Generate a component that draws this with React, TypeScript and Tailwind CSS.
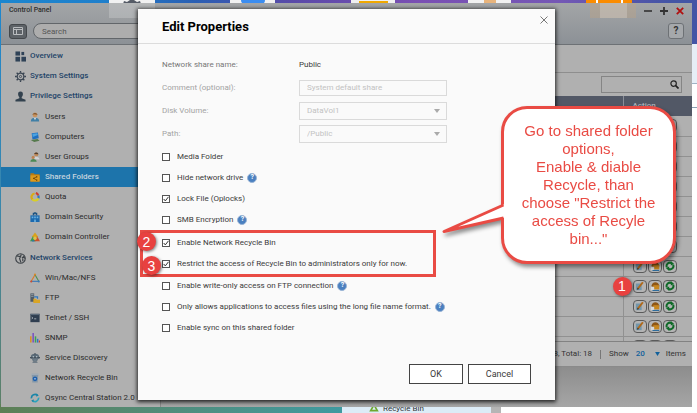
import React from 'react';

type IconProps = { children: React.ReactNode; size?: 'sm' | 'md' };

const Glyph: React.FC<IconProps> = ({ children, size = 'sm' }) => (
  <svg viewBox="0 0 12 12" className={size === 'md' ? 'size-[11px] shrink-0' : 'size-[10px] shrink-0'} fill="none">
    {children}
  </svg>
);

const icons: Record<string, React.ReactNode> = {
  overview: (
    <g fill="#2f4257">
      <rect x="0.5" y="0.5" width="5" height="4.5" />
      <rect x="7" y="1" width="3" height="3.5" />
      <rect x="0.5" y="6.300" width="5" height="5.200" />
      <rect x="7" y="6.300" width="5" height="5.200" />
    </g>
  ),
  gear: (
    <g stroke="#3b4653">
      <circle cx="6" cy="6" r="3.6" strokeWidth="1.3" />
      <circle cx="6" cy="6" r="1.2" strokeWidth="1" />
      <path d="M6 0v2M6 10v2M0 6h2M10 6h2M1.8 1.8l1.4 1.4M8.8 8.8l1.4 1.4M1.8 10.2l1.4-1.4M8.8 3.2l1.4-1.4" strokeWidth="1.5" />
    </g>
  ),
  privilege: (
    <path d="M6 0.5c2 0 2.8 1.400 2.600 3.200C8.400 5.200 7.700 6 7.300 6.500v1.500l4.200 1.600v1.900H0.500V9.600L4.700 8V6.500C4.300 6 3.600 5.200 3.400 3.700 3.200 1.900 4 .5 6 .5z" fill="#33424f" />
  ),
  globe: (
    <g stroke="#3f4449">
      <circle cx="6" cy="6" r="5.2" strokeWidth="1.2" />
      <path d="M2 3.200L6 4l-1 2 1.500 4.500M7 1.500l-1 2M7.500 5.500l2-1.500 1.200 2M8.500 6v3" strokeWidth="1.3" />
    </g>
  ),
  user: (
    <>
      <circle cx="6" cy="3.500" r="2.800" fill="#c9925c" />
      <path d="M3 3.200C3.200.8 8.800.8 9 3.200 7.500 2.600 5 2.200 3 3.200z" fill="#6d4a2b" />
      <path d="M1 11.500C1 8.200 3 7 6 7s5 1.200 5 4.500z" fill="#3f7fa6" />
      <path d="M4.500 7L6 9.800 7.500 7z" fill="#d9d9d9" />
    </>
  ),
  computer: (
    <>
      <path d="M2 1.500L9.500 .5l1 7L3 9z" fill="#1f6fc0" />
      <path d="M2.800 2.200L9 1.400l.3 2.300-6 2.300z" fill="#4ca3e0" />
      <path d="M1 9.500L9 8.500l2.500 2L5 12z" fill="#55794c" />
    </>
  ),
  group: (
    <>
      <circle cx="7.500" cy="3" r="2.500" fill="#c08a58" />
      <path d="M5 2.500C5.500 0 9.800 0 10 2.800z" fill="#53402f" />
      <path d="M4 8.500C4 6.500 5.500 5.800 7.500 5.800s3.800 1 3.800 3.200z" fill="#cfd3d6" />
      <circle cx="3.800" cy="6.500" r="1.900" fill="#bd8352" />
      <path d="M.5 11.800C.5 9.500 2 8.500 4 8.500s4 1 4 3.300z" fill="#4c8a56" />
    </>
  ),
  folder: (
    <>
      <path d="M.5 1.500h4l1 1.300h6v8.700H.5z" fill="#b97a10" />
      <rect x="0.500" y="4" width="11" height="7.500" fill="#dd9a1c" />
      <path d="M8 5.700L4.500 7.700 8 9.700" stroke="#6d4305" strokeWidth="0.900" />
      <path d="M7.300 5h1.500v1.500H7.300zM3.800 7h1.500v1.500H3.800zM7.300 9h1.500v1.500H7.300z" fill="#6d4305" />
    </>
  ),
  quota: (
    <g strokeWidth="2.600">
      <path d="M5.500 1.800A4.300 4.300 0 0 0 3 9" stroke="#d9ab14" />
      <path d="M3 9a4.300 4.300 0 0 0 7-1.500" stroke="#d9cf24" />
      <path d="M10.200 7.500A4.300 4.300 0 0 0 9.800 4.300" stroke="#2d7ac2" />
      <path d="M7 1.200A4.300 4.300 0 0 1 9.800 4" stroke="#cf3b2c" />
    </g>
  ),
  security: (
    <>
      <path d="M0.500 4h11v8H.5z" fill="#1b69ae" />
      <path d="M4 4V1.500h4V4M6 0v3" stroke="#174f7f" strokeWidth="1.400" />
      <path d="M2 5.500h2v2H2zM5 5.500h2v2H5zM8 5.500h2v2H8zM5 9h2v3H5z" fill="#6cb1df" />
    </>
  ),
  controller: (
    <>
      <path d="M6 .5L10 6H2z" fill="#d9a21a" />
      <path d="M3.500 5L7 11H0z" fill="#3c9950" />
      <path d="M8.500 5l3.500 6H5z" fill="#c9512b" />
      <circle cx="6" cy="7.500" r="2" fill="#e0c04a" />
      <path d="M2 11.500C2.500 9.500 5 9.500 5.500 11.500z" fill="#2f6fb0" />
    </>
  ),
  triangle: (
    <>
      <path d="M6 2L1.500 10" stroke="#d97b25" strokeWidth="1.300" />
      <path d="M6 2l4.500 8" stroke="#4a8f52" strokeWidth="1.300" />
      <path d="M1.500 10h9" stroke="#3b78b8" strokeWidth="1.300" />
      <circle cx="6" cy="1.800" r="1.300" fill="#d9892b" />
      <circle cx="1.500" cy="10.200" r="1.300" fill="#c94b32" />
      <circle cx="10.500" cy="10.200" r="1.300" fill="#3c78b5" />
    </>
  ),
  ftp: (
    <>
      <rect x="0.500" y="0.500" width="4.500" height="10" fill="#4e5a66" />
      <path d="M1.300 2h3M1.300 4h3" stroke="#9aa6b0" />
      <path d="M4 7h3l1 1h4v4H4z" fill="#d9a526" />
      <path d="M5 4.500h4V7" stroke="#2f78bd" strokeWidth="1.500" />
    </>
  ),
  terminal: (
    <>
      <rect x="0.500" y="1" width="11" height="10" fill="#2f3e50" />
      <rect x="0.500" y="1" width="11" height="1.500" fill="#5c6b7b" />
      <path d="M2 5l1.500 1L2 7M5 7h2.500" stroke="#c6ccd2" strokeWidth="0.900" />
    </>
  ),
  chart: (
    <>
      <path d="M1 4v7.500" stroke="#d98f1f" strokeWidth="1.800" />
      <path d="M3.800 0v11.500" stroke="#7a4fc0" strokeWidth="1.800" />
      <path d="M6.600 4v7.500" stroke="#3aa155" strokeWidth="1.800" />
      <path d="M9.200 7v4.500" stroke="#2e76c4" strokeWidth="1.800" />
      <path d="M11.300 9v2.500" stroke="#c9442f" strokeWidth="1.400" />
    </>
  ),
  discovery: (
    <>
      <path d="M1 5a5 4 0 0 1 10 0v2H1z" fill="#5b6b78" />
      <path d="M6 0v2M0 5.500h12" stroke="#45525e" strokeWidth="1.300" />
      <circle cx="4" cy="4.500" r="0.900" fill="#b9c4cc" />
      <circle cx="8" cy="4.500" r="0.900" fill="#b9c4cc" />
      <path d="M3 7h6l-1 3H4zM3 11.300h6" stroke="#5b6b78" fill="#74838f" />
    </>
  ),
  bin: (
    <>
      <path d="M2 1h8l-.8 10.500H2.800z" fill="#8497a8" />
      <path d="M1.500 1.500h9" stroke="#a9b3bb" strokeWidth="1.200" />
      <circle cx="6" cy="7" r="2.800" fill="#1d5fae" />
      <circle cx="6" cy="7" r="1" fill="#b8cfe4" />
    </>
  ),
  qsync: (
    <g strokeWidth="2">
      <path d="M1.700 6.500A4.300 4.300 0 0 1 9 3" stroke="#1b86a8" />
      <path d="M10.300 5.500A4.300 4.300 0 0 1 3 9" stroke="#29a3bd" />
      <path d="M8 .5l2.500 2.500-3 1.500zM4 11.500L1.500 9l3-1.500z" fill="#1b86a8" />
    </g>
  ),
};

const mainItems = [
  { icon: 'overview', label: 'Overview' },
  { icon: 'gear', label: 'System Settings' },
  { icon: 'privilege', label: 'Privilege Settings' },
];

const privilegeItems = [
  { icon: 'user', label: 'Users' },
  { icon: 'computer', label: 'Computers' },
  { icon: 'group', label: 'User Groups' },
  { icon: 'folder', label: 'Shared Folders', active: true },
  { icon: 'quota', label: 'Quota' },
  { icon: 'security', label: 'Domain Security' },
  { icon: 'controller', label: 'Domain Controller' },
];

const networkItems = [
  { icon: 'triangle', label: 'Win/Mac/NFS' },
  { icon: 'ftp', label: 'FTP' },
  { icon: 'terminal', label: 'Telnet / SSH' },
  { icon: 'chart', label: 'SNMP' },
  { icon: 'discovery', label: 'Service Discovery' },
  { icon: 'bin', label: 'Network Recycle Bin' },
  { icon: 'qsync', label: 'Qsync Central Station 2.0' },
];

const NavHeading: React.FC<{ icon: string; label: string }> = ({ icon, label }) => (
  <a href="#" className="flex h-5 items-center gap-1 pl-[14px] font-medium text-[#1f4468]">
    <Glyph size="md">{icons[icon]}</Glyph>
    {label}
  </a>
);

const NavItem: React.FC<{ icon: string; label: string; active?: boolean }> = ({ icon, label, active }) => (
  <a
    href="#"
    className={`flex h-5 items-center gap-[5px] pl-[29px] whitespace-nowrap ${
      active ? 'bg-[#1d74ab] font-medium text-[#c3d3de]' : 'text-[#2b2b2b]'
    }`}
  >
    <Glyph>{icons[icon]}</Glyph>
    {label}
  </a>
);

const Sidebar = () => (
  <nav className="w-[160px] shrink-0 overflow-hidden border-r border-[#8a8a8a] bg-[#b0b0b0] pt-px text-[8px]">
    {mainItems.map((item) => <NavHeading key={item.label} {...item} />)}
    <div className="my-px">
      {privilegeItems.map((item) => <NavItem key={item.label} {...item} />)}
    </div>
    <NavHeading icon="globe" label="Network Services" />
    <div>
      {networkItems.map((item) => <NavItem key={item.label} {...item} />)}
    </div>
  </nav>
);

const Badge: React.FC<{ n: number; className: string }> = ({ n, className }) => (
  <span
    className={`absolute z-20 flex size-[19px] items-center justify-center rounded-full bg-[#e8413f] font-['Liberation_Sans',sans-serif] text-[14px] leading-none text-white shadow-[1px_1px_3px_rgba(0,0,0,0.5)] ${className}`}
  >
    {n}
  </span>
);

const RowButton: React.FC<{ label: string; children: React.ReactNode }> = ({ label, children }) => (
  <button aria-label={label} className="flex h-[13px] w-[14px] items-center justify-center rounded border border-[#5a5a5a] bg-[#b4b4b4]">
    <Glyph>{children}</Glyph>
  </button>
);

const RowActions = () => (
  <div className="flex gap-px pl-[9px]">
    <RowButton label="Edit properties">
      <path d="M1 3h7v8H1z" fill="#7296ab" />
      <path d="M3.500 9L9.500 1.500" stroke="#b06a1c" strokeWidth="2.400" />
      <path d="M2.500 10.500l.5-2.500 2 1.500z" fill="#3b2a18" />
    </RowButton>
    <RowButton label="Edit permissions">
      <path d="M2 5C3 0 10 .5 11 5v2H2z" fill="#8e5615" />
      <path d="M4 5h7v5H4z" fill="#c6861f" />
      <path d="M1 7h4v4H1z" fill="#d8d8d8" />
      <path d="M3 11.500h8" stroke="#2e6c9c" strokeWidth="1.500" />
    </RowButton>
    <RowButton label="Refresh">
      <path d="M2.200 7.500A4 4 0 0 1 8 2.600" stroke="#0f6a28" strokeWidth="2.400" />
      <path d="M9.800 4.500A4 4 0 0 1 4 9.400" stroke="#0f6a28" strokeWidth="2.400" />
      <path d="M7 0l4 3.500-4 2zM5 12L1 8.500l4-2z" fill="#0f6a28" />
    </RowButton>
  </div>
);

const ShareTable = () => (
  <div className="min-h-0 flex-1 overflow-hidden border-b border-[#828282]">
    <table className="w-full table-fixed border-collapse text-left text-[8px]">
      <colgroup>
        <col />
        <col className="w-[69px]" />
      </colgroup>
      <thead className="bg-[#525866] text-[#aeb1b8]">
        <tr className="h-5">
          <td className="p-0" />
          <th scope="col" className="border-l border-[#8b8f98] p-0 pl-[9px] font-medium">Action</th>
        </tr>
      </thead>
      <tbody>
        {Array.from({ length: 12 }, (_, i) => (
          <tr key={i} className="h-5 border-b border-[#919191]">
            <td className="p-0" />
            <td className="relative border-l border-[#919191] p-0">
              <RowActions />
              {i === 8 && <Badge n={1} className="top-0 -left-[11px]" />}
            </td>
          </tr>
        ))}
      </tbody>
    </table>
  </div>
);

const ControlPanel = () => (
  <section className="absolute top-[3px] right-[5px] bottom-[6px] left-px flex flex-col overflow-hidden bg-[#b0b0b0]">
    <header className="relative shrink-0 border-b border-[#6d7175] bg-linear-to-b from-[#a3a5a7] to-[#8c9196]">
      {/* desktop tiles showing faintly through the title bar */}
      <div className="absolute top-0 left-[108px] h-[15px] w-[46px] bg-white/20" />
      <div className="absolute top-0 right-[56px] flex h-[15px] w-[46px] justify-center bg-[#c9a77c]/30">
        <div className="w-[27px] bg-white/20" />
      </div>
      <div className="relative flex h-[15px] items-center justify-between pr-2 pl-2">
        <h1 className="text-[7px] font-medium text-[#2d2d2d]">Control Panel</h1>
        <div className="flex items-center gap-2">
          <button aria-label="Minimize">
            <svg viewBox="0 0 8 8" className="size-2"><path d="M0 4h8" stroke="#333" strokeWidth="1.600" /></svg>
          </button>
          <button aria-label="Maximize">
            <svg viewBox="0 0 8 8" className="size-2"><path d="M0 4h8M4 0v8" stroke="#333" strokeWidth="1.800" /></svg>
          </button>
          <button aria-label="Close">
            <svg viewBox="0 0 8 8" className="size-2"><path d="M.8.8l6.400 6.400M7.200.8L.8 7.200" stroke="#b01010" strokeWidth="1.800" /></svg>
          </button>
        </div>
      </div>
      <div className="flex h-[26px] items-center gap-[6px] pr-2 pl-2">
        <button aria-label="Toggle sidebar" className="flex h-[15px] w-[18px] items-center justify-center rounded-[3px] border border-[#44484c] bg-[#5d6267]">
          <svg viewBox="0 0 10 8" className="h-2 w-[10px]" fill="none" stroke="#b9bcbf">
            <path d="M.5.500h9v7h-9zM.5 2.500h9M3.500 2.500v5" />
          </svg>
        </button>
        <input
          type="text"
          aria-label="Search"
          placeholder="Search"
          className="h-4 w-[130px] rounded-full border border-[#62666a] bg-[#adadad] px-2 text-[8px] placeholder-[#555]"
        />
        <button aria-label="Help" className="ml-auto flex size-4 items-center justify-center rounded-[3px] border border-[#6d7175] bg-[#a5a8ab] text-[10px] font-bold text-[#333]">
          ?
        </button>
      </div>
    </header>

    <div className="flex min-h-0 flex-1">
      <Sidebar />
      <main className="flex min-w-0 flex-1 flex-col">
        <div className="h-7 shrink-0 border-b border-[#8e8e8e]" />
        <div className="flex h-[23px] shrink-0 items-center justify-end pr-[10px]">
          <label className="flex h-[17px] w-[81px] items-center border border-[#858585] pr-[2px]">
            <input type="text" aria-label="Search folders" className="min-w-0 flex-1" />
            <svg viewBox="0 0 10 10" className="size-[9px]" fill="none" stroke="#222">
              <circle cx="4" cy="4" r="3" strokeWidth="1.300" />
              <path d="M6.300 6.300L9.500 9.500" strokeWidth="1.800" />
            </svg>
          </label>
        </div>
        <ShareTable />
        <div className="flex h-[25px] shrink-0 items-center justify-end border-b border-[#8a8a8a] pr-[6px] text-[8px] text-[#333]">
          <span>8, Total: 18</span>
          <span className="mx-2 h-[9px] w-px bg-[#777]" />
          <label htmlFor="page-size">Show</label>
          <span className="relative mr-[6px] ml-[7px] flex items-center">
            <select id="page-size" className="w-6 appearance-none text-[8px] font-medium text-[#11609b]">
              <option>20</option>
            </select>
            <svg viewBox="0 0 6 5" className="pointer-events-none absolute right-0 h-1 w-[5px]"><path d="M0 0h6L3 5z" fill="#11609b" /></svg>
          </span>
          <span>Items</span>
        </div>
        <div className="h-10 shrink-0 bg-linear-to-b from-[#8d8d8d] to-[#a6a6a6]" />
      </main>
    </div>
  </section>
);

const HelpDot = () => (
  <span className="flex size-[10px] items-center justify-center rounded-full border border-[#9bb5d6] bg-[#4a80c0] text-[7px] leading-none font-bold text-white">
    ?
  </span>
);

const CheckRow: React.FC<{ id: string; label: string; checked?: boolean; help?: boolean }> = ({ id, label, checked, help }) => (
  <div className="flex h-[21px] items-center">
    <span className="relative flex size-[8px]">
      <input id={id} type="checkbox" defaultChecked={checked} className="peer size-[8px] appearance-none border border-[#555] bg-white" />
      <svg viewBox="0 0 8 8" className="pointer-events-none absolute inset-0 hidden size-[8px] peer-checked:block" fill="none">
        <path d="M1.700 4l1.600 1.900L6.500 1.800" stroke="#333" strokeWidth="1" />
      </svg>
    </span>
    <label htmlFor={id} className="pr-1 pl-[7px] whitespace-nowrap">{label}</label>
    {help && <HelpDot />}
  </div>
);

const SelectRow: React.FC<{ id: string; label: string; value: string }> = ({ id, label, value }) => (
  <div className="flex h-[23px] items-center text-[#a3a3a3]">
    <label htmlFor={id} className="w-[137px]">{label}</label>
    <div className="relative flex h-[18px] w-[148px] items-center border border-[#dadada]">
      <select id={id} disabled className="w-full appearance-none px-[7px] text-[#c2c2c2]">
        <option>{value}</option>
      </select>
      <svg viewBox="0 0 6 4" className="pointer-events-none absolute right-[6px] h-1 w-[6px]"><path d="M0 0h6L3 4z" fill="#aaa" /></svg>
    </div>
  </div>
);

const Callout = () => (
  <div className="absolute top-[97px] -right-[121px] z-30 w-[175px] drop-shadow-[2px_3px_2px_rgba(0,0,0,0.45)]">
    <p className="rounded-[26px] border-[3px] border-[#e94b44] bg-white px-[13px] py-[13px] text-center font-['Liberation_Sans',Arial,sans-serif] text-[15px] leading-[18px] text-[#e94b44]">
      Go to shared folder options,<br />
      Enable &amp; diable Recycle, than choose "Restrict the access of Recyle bin..."
    </p>
    <svg viewBox="0 0 64 32" className="absolute top-[96px] -left-[60px] h-8 w-16" fill="none">
      <path d="M64 2L61.500 3 3 29.500 61.500 16 64 15.500z" fill="#fff" />
      <path d="M62.500 3L3 29.500 62.500 16" stroke="#e94b44" strokeWidth="3" strokeLinejoin="round" />
    </svg>
  </div>
);

const EditProperties = () => (
  <div role="dialog" aria-labelledby="dialog-title" className="relative flex w-[417px] flex-col bg-[#fafafa] text-[8px] text-[#3a3a3a] shadow-[0_1px_4px_1px_rgba(0,0,0,0.8)]">
    <header className="flex h-[35px] items-center justify-between border-b border-[#dcdcdc] pr-[7px] pl-6">
      <h2 id="dialog-title" className="text-[13px] font-bold text-black">Edit Properties</h2>
      <button aria-label="Close dialog" className="mb-3">
        <svg viewBox="0 0 8 8" className="size-2"><path d="M.5.500l7 7M7.500.500l-7 7" stroke="#777" /></svg>
      </button>
    </header>

    <div className="px-6 pt-[9px]">
      <div className="flex h-[23px] items-center">
        <span className="w-[137px] text-[#777]">Network share name:</span>
        <span>Public</span>
      </div>
      <div className="flex h-[23px] items-center text-[#a3a3a3]">
        <label htmlFor="comment" className="w-[137px]">Comment (optional):</label>
        <input id="comment" type="text" disabled defaultValue="System default share" className="h-4 w-[148px] border border-[#dadada] px-[7px] text-[#c2c2c2]" />
      </div>
      <SelectRow id="volume" label="Disk Volume:" value="DataVol1" />
      <SelectRow id="path" label="Path:" value="/Public" />
    </div>

    <div className="px-6 pt-px">
      <CheckRow id="media" label="Media Folder" />
      <CheckRow id="hide" label="Hide network drive" help />
      <CheckRow id="lock" label="Lock File (Oplocks)" checked />
      <CheckRow id="smb" label="SMB Encryption" help />
    </div>
    <div className="relative mt-[2px] px-6">
      <div className="pointer-events-none absolute -top-[2px] right-[119px] -bottom-[3px] left-[2px] border-[3px] border-[#e94b44]" />
      <CheckRow id="recycle" label="Enable Network Recycle Bin" checked />
      <CheckRow id="restrict" label="Restrict the access of Recycle Bin to administrators only for now." checked />
      <Badge n={2} className="top-0 -left-px" />
      <Badge n={3} className="top-6 left-1" />
    </div>
    <div className="mt-px px-6">
      <CheckRow id="writeonly" label="Enable write-only access on FTP connection" help />
      <CheckRow id="longname" label="Only allows applications to access files using the long file name format." help />
      <CheckRow id="sync" label="Enable sync on this shared folder" />
    </div>

    <footer className="flex justify-end gap-[5px] px-6 pt-[26px] pb-4 text-[9px]">
      <button className="h-5 w-[54px] border border-[#444] bg-white">OK</button>
      <button className="h-5 w-[63px] border border-[#444] bg-white">Cancel</button>
    </footer>
    <Callout />
  </div>
);

// Slice of the wallpaper and shortcut tiles that shows above the window
const DesktopTop = () => (
  <div className="flex h-11 items-start bg-[linear-gradient(to_right,#1b86cf_0%,#1f7fcb_15%,#2a5fb3_28%,#5a4aa8_42%,#7a4fb3_60%,#7558b5_80%,#4355a5_96%)]">
    <span className="ml-[109px] flex h-5 w-[46px] justify-center bg-[#f1f1f1]">
      <svg viewBox="0 0 20 4" className="h-1 w-5"><path d="M1 4l1-3 3 1 3-2h4l3 2 3-1 1 3z" fill="#555b66" /></svg>
    </span>
    <span className="ml-[75px] flex h-5 w-[45px] justify-center bg-[#f1f1f1]">
      <span className="h-1 w-6 rounded-b-full bg-[#3b8df0]" />
    </span>
    <span className="ml-[76px] flex h-5 w-[44px] justify-center bg-[#f1f1f1]">
      <span className="mt-px h-[2px] w-[29px] bg-[#f0a800]" />
    </span>
    <span className="ml-[73px] flex h-5 w-[43px] justify-center bg-[#f1f1f1]">
      <span className="h-1 w-3 bg-[#e8b47c]" />
    </span>
    <span className="ml-[75px] flex h-5 w-[46px] justify-center bg-[#fb8c00]">
      <span className="h-1 w-[27px] border-x-2 border-white" />
    </span>
  </div>
);

const App: React.FC = () => (
  <div className="relative flex h-screen min-h-[413px] flex-col justify-between overflow-hidden bg-white font-[Roboto,sans-serif] leading-none">
    <div className="absolute top-0 bottom-0 left-0 w-2 bg-linear-to-b from-[#1b86cf] via-[#3a87ab] to-[#5d7f63]" />
    <div className="absolute top-11 right-0 h-10 w-[5px] border-b border-[#9fb2c4] bg-[#e6eef6]" />
    <div className="absolute top-[107px] right-0 h-px w-[5px] bg-[#8aa0b2]" />
    <DesktopTop />
    <div className="relative flex h-[9px] items-end">
      <div className="h-full w-[342px] bg-linear-to-r from-[#5d7f55] to-[#3f9aa0]" />
      <div className="flex h-full w-[149px] items-center gap-1 bg-[#dcecf7] pl-[27px] text-[8px] whitespace-nowrap text-[#333]">
        <Glyph>
          <path d="M6 1l4 7H2z" stroke="#6fa82e" strokeWidth="2" />
        </Glyph>
        Recycle Bin
      </div>
      <div className="h-full w-[10px] bg-[#b5b5b5]" />
    </div>
    <ControlPanel />
    <div className="absolute inset-x-0 top-[9px] flex justify-center pr-1">
      <EditProperties />
    </div>
  </div>
);

export default App;
